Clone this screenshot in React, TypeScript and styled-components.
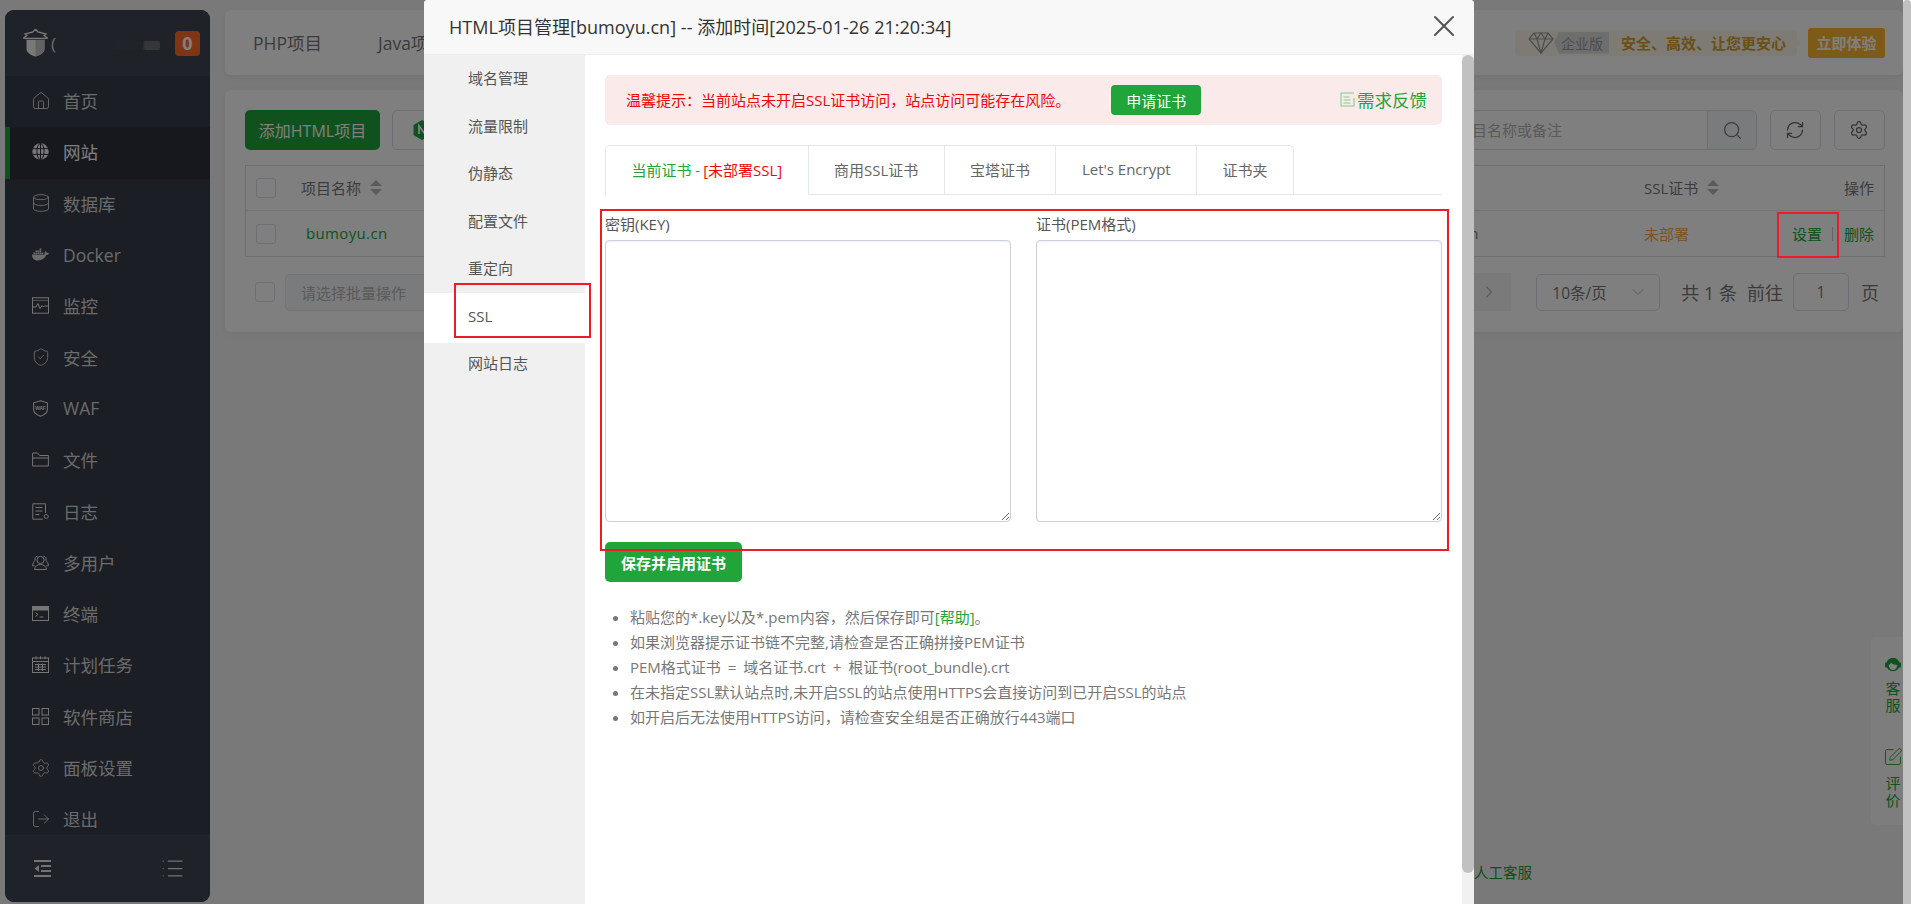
import React from "react";
import styled, { createGlobalStyle } from "styled-components";
import { Home, Database, ShieldCheck, Settings, LogOut, List, Search, RefreshCw, ChevronRight, ChevronDown, X, SquarePen } from "lucide-react";
import { FaDocker } from "react-icons/fa";

const FONT = `"Open Sans", "Noto Sans CJK SC", sans-serif`;
const GREEN = "#20a53a";

const Global = createGlobalStyle`
  html, body { margin: 0; padding: 0; width: 1911px; height: 904px; overflow: hidden; background: #f2f2f2; }
  body { font-family: ${FONT}; }
  * { box-sizing: border-box; }
`;

const Root = styled.div`display:flex;width:1911px;height:904px;`;
const Viewport = styled.div`position:relative;width:1903px;height:904px;overflow:hidden;background:#f2f2f2;`;
const PageThumb = styled.div`width:8px;height:904px;background:#c1c1c1;border-radius:4px 4px 0 0;`;
const Shell = styled.div`display:flex;height:904px;`;

const Sidebar = styled.aside`
  width:205px;margin:10px 0 2px 5px;background:#363c48;border-radius:9px;overflow:hidden;
  display:flex;flex-direction:column;flex:none;
`;
const Brand = styled.div`
  height:66px;flex:none;background:#3e4450;display:flex;align-items:center;padding:0 10px 0 18px;
`;
const BrandMark = styled.span`font-size:17px;color:#d8d8d8;margin-left:3px;width:14px;overflow:hidden;`;
const Smudge = styled.span`
  width:46px;height:9px;margin:5px 0 0 49px;border-radius:2px;
  background:linear-gradient(90deg,#404650 0%,#404650 62%,#6a6c72 68%,#6a6c72 100%);filter:blur(.6px);
`;
const Badge = styled.span`
  margin-left:auto;width:25px;height:25px;border-radius:4px;background:#ff6a28;color:#fff;
  font-size:18px;font-weight:700;display:flex;align-items:center;justify-content:center;
`;
const Nav = styled.nav`flex:1;min-height:0;overflow:hidden;`;
const NavItem = styled.div<{ $active?: boolean }>`
  height:51.3px;display:flex;align-items:center;gap:14px;padding-left:${p => (p.$active ? 22 : 27)}px;padding-bottom:2px;
  font-size:17.5px;color:${p => (p.$active ? "#fff" : "#d6d6d6")};
  background:${p => (p.$active ? "#2c303a" : "transparent")};
  border-left:${p => (p.$active ? `5px solid ${GREEN}` : "0")};
  & > svg{width:17px;height:17px;flex:none;}
`;
const NavGlyph = styled.span`
  display:flex;width:17px;height:17px;align-items:center;justify-content:center;flex:none;
  svg{width:20px;height:20px;flex:none;}
`;
const SideFoot = styled.div`
  height:67px;flex:none;background:#3e4450;border-top:1px solid #454b57;display:flex;align-items:center;
  justify-content:space-between;padding:0 25px 2px 29px;color:#e6e6e6;
`;

const Main = styled.main`flex:1;min-width:0;padding:10px 0 0 15px;display:flex;flex-direction:column;gap:15px;`;
const Card = styled.section`background:#fff;border-radius:6px;box-shadow:0 2px 6px rgba(0,0,0,.05);`;
const TopBar = styled(Card)`height:65px;display:flex;align-items:center;padding:0 18px 0 28px;gap:56px;`;
const TopTab = styled.span`font-size:17.5px;color:#777;`;
const Promo = styled.div`margin-left:auto;display:flex;align-items:center;`;
const PromoPill = styled.div`
  position:relative;height:26px;width:282px;background:#fcf7ea;border-radius:4px;display:flex;align-items:center;padding-left:13px;
  &::after{content:"";position:absolute;right:-4px;top:8px;border-left:5px solid #fcf7ea;border-top:5px solid transparent;border-bottom:5px solid transparent;}
`;
const EditionTag = styled.span`
  height:22px;width:55px;background:#dcdcdc;color:#9a9a9a;font-size:14px;display:flex;align-items:center;justify-content:flex-end;padding-right:6px;
  clip-path:polygon(0 50%,5px 0,100% 0,100% 100%,5px 100%);
`;
const PromoText = styled.span`font-size:15px;font-weight:700;color:#d49e2c;margin-left:12px;white-space:nowrap;`;
const TrialButton = styled.span`
  margin-left:11px;width:77px;height:30px;border-radius:3px;background:#fab52f;color:#fff;font-size:15px;font-weight:700;
  display:flex;align-items:center;justify-content:center;
`;

const ListCard = styled(Card)`padding:20px 18px 21px 20px;`;
const Toolbar = styled.div`height:40px;display:flex;align-items:center;`;
const PrimaryButton = styled.span`
  width:135px;height:40px;border-radius:5px;background:${GREEN};color:#fff;font-size:16px;
  display:flex;align-items:center;justify-content:center;
`;
const OutlineButton = styled.span`
  margin-left:12px;width:120px;height:40px;border-radius:5px;border:1px solid #dcdfe6;padding-left:20px;display:flex;align-items:center;
`;
const SearchGroup = styled.div`margin-left:auto;display:flex;height:40px;`;
const SearchInput = styled.div`
  width:312px;border:1px solid #dcdfe6;border-right:0;border-radius:5px 0 0 5px;padding:0 0 2px 16px;font-size:15px;color:#b4b4b4;display:flex;align-items:center;
`;
const SearchButton = styled.div`
  width:50px;border:1px solid #dcdfe6;border-radius:0 5px 5px 0;background:#f5f7fa;color:#777;display:flex;align-items:center;justify-content:center;
`;
const IconButton = styled.div`
  margin-left:12.5px;width:51.5px;height:40px;border:1px solid #dcdfe6;border-radius:5px;color:#666;display:flex;align-items:center;justify-content:center;
`;

const Table = styled.div`margin-top:15px;border:1px solid #dddfe2;height:92px;`;
const TableRow = styled.div<{ $head?: boolean }>`
  display:grid;grid-template-columns:55px 1099px 244px 133px 1fr;align-items:center;height:${p => (p.$head ? 45 : 46)}px;
  ${p => (p.$head ? "border-bottom:1px solid #e6e8eb;color:#777;" : "")}
  font-size:15px;
`;
const Check = styled.span`
  display:block;width:20px;height:20px;border:1px solid #dcdfe6;border-radius:3px;background:#fff;margin-left:10px;flex:none;
`;
const HeadCell = styled.div`display:flex;align-items:center;gap:9px;white-space:nowrap;margin-top:-1px;`;
const SiteName = styled.span`margin:-2px 0 0 5px;color:${GREEN};letter-spacing:.35px;`;
const HiddenNote = styled.span`margin-top:-2px;color:#777;`;
const Unset = styled.span`margin-top:-2px;color:#f0a64a;`;
const Ops = styled.div`display:flex;justify-content:flex-end;align-items:center;padding-right:10px;color:#777;margin-top:-1px;`;
const OpLink = styled.span`color:${GREEN};margin-top:-1px;`;
const OpSep = styled.span`width:1px;height:14px;background:#c8c8c8;margin:0 11px 0 10px;`;

const Pager = styled.div`margin-top:16px;height:38px;display:flex;align-items:center;`;
const BatchSelect = styled.div`
  width:300px;height:37px;border:1px solid #e4e7ed;border-radius:5px;background:#f5f7fa;color:#b4b4b4;font-size:15px;
  display:flex;align-items:center;padding-left:15px;margin-left:10px;
`;
const PagerRight = styled.div`margin-left:auto;display:flex;align-items:center;height:38px;font-size:18px;color:#777;`;
const NextBtn = styled.div`
  width:50px;height:38px;background:#f4f4f5;color:#b8b8b8;display:flex;align-items:center;justify-content:center;padding-left:6px;
`;
const SizeSelect = styled.div`
  margin-left:25px;width:124px;height:37px;border:1px solid #dcdfe6;border-radius:5px;font-size:15.5px;display:flex;align-items:center;justify-content:space-between;padding:0 11px 0 15px;
  svg{color:#bbb;}
`;
const TotalText = styled.span`margin-left:21px;white-space:pre;`;
const GotoText = styled.span`margin-left:10px;`;
const PageInput = styled.div`
  margin-left:10px;width:56px;height:38px;border:1px solid #dcdfe6;border-radius:5px;font-size:15.5px;display:flex;align-items:center;justify-content:center;
`;
const UnitText = styled.span`margin-left:12px;margin-right:6px;`;

const FloatPanel = styled.div`
  position:absolute;right:0;top:637px;width:32px;height:188px;background:#fbfbfb;border-radius:5px 0 0 5px;
  display:flex;flex-direction:column;align-items:center;padding:20px 0 0 12px;color:${GREEN};font-size:15px;line-height:16.5px;
`;
const FloatLabel = styled.span<{ $mb?: number }>`
  display:block;width:15px;margin:8px 0 ${p => p.$mb ?? 0}px;text-align:center;
`;
const PenGlyph = styled(SquarePen)`margin:0 -2px;`;
const ServiceLink = styled.span`
  position:absolute;right:371px;top:862px;font-size:14.5px;line-height:22px;color:#1f9c35;white-space:nowrap;
`;

const Mask = styled.div`position:absolute;inset:0;background:rgba(0,0,0,.5);z-index:10;`;

const Modal = styled.div`
  position:absolute;left:424px;top:0;width:1050px;height:904px;background:#fff;border-radius:4px 4px 0 0;z-index:11;
  display:flex;flex-direction:column;overflow:hidden;
`;
const ModalHead = styled.header`
  height:55px;flex:none;background:#f8f8f8;border-bottom:1px solid #eee;display:flex;align-items:center;justify-content:space-between;
  padding:0 12px 2px 25px;font-size:18px;letter-spacing:.03px;color:#333;white-space:nowrap;
  svg{color:#555;}
`;
const ModalBody = styled.div`flex:1;min-height:0;display:flex;`;
const SideMenu = styled.div`width:161px;flex:none;background:#f0f0f0;`;
const MenuItem = styled.div<{ $active?: boolean }>`
  height:${p => (p.$active ? 50 : 47.5)}px;margin-bottom:${p => (p.$active ? -2.5 : 0)}px;
  ${p => (p.$active ? "background:#fff;" : "")}
  padding-left:44px;line-height:47.5px;font-size:15px;color:#555;
`;
const Content = styled.div`flex:1;min-width:0;padding:20px 20px 0;`;
const ModalScroll = styled.div`width:12px;flex:none;background:#f1f1f1;`;
const ModalThumb = styled.div`height:818px;background:#c1c1c1;border-radius:6px;`;

const Alert = styled.div`
  height:50px;border-radius:5px;background:#faeaea;padding:0 15px 0 21px;display:flex;align-items:center;font-size:15px;color:#ef0808;
`;
const AlertText = styled.span`margin-top:-2px;`;
const AlertButton = styled.span`
  margin-left:41px;width:90px;height:30px;border-radius:4px;background:${GREEN};color:#fff;font-size:15px;display:flex;align-items:center;justify-content:center;
`;
const Feedback = styled.span`margin:-2px 0 0 auto;display:flex;align-items:center;gap:2px;font-size:17.5px;color:${GREEN};`;

const Tabs = styled.div`margin-top:20px;height:50px;display:flex;border-bottom:1px solid #e4e7ed;`;
const TabBtn = styled.div<{ $active?: boolean }>`
  height:${p => (p.$active ? 50 : 49)}px;padding:0 25.4px 2px;display:flex;align-items:center;font-size:15px;color:#666;background:#fff;
  border:1px solid #e4e7ed;border-width:1px 1px 0 0;
  ${p => (p.$active ? "border-left-width:1px;border-radius:5px 0 0 0;" : "")}
  &:last-child{border-radius:0 5px 0 0;}
`;
const TabGreen = styled.span`color:${GREEN};`;
const TabRed = styled.span`color:#ef0808;margin-left:3px;`;

const CertGrid = styled.div`margin-top:21px;display:grid;grid-template-columns:406px 406px;column-gap:25px;`;
const FieldLabel = styled.label`display:block;height:24px;font-size:15px;line-height:17px;color:#555;`;
const CertArea = styled.textarea`
  display:block;width:406px;height:282px;border:1px solid #ccd0dc;border-radius:4px;background:#fff;resize:both;outline:none;
  box-shadow:inset 0 1px 2px rgba(0,0,0,.06);
`;
const SaveButton = styled.span`
  position:relative;z-index:2;margin-top:20px;width:137px;height:40px;border-radius:5px;background:${GREEN};color:#fff;font-size:15px;font-weight:600;
  display:flex;align-items:center;justify-content:center;
`;
const Notes = styled.ul`margin:23px 0 0;padding:0 0 0 25px;font-size:15px;line-height:25px;color:#777;word-spacing:3px;`;
const Note = styled.li`&::marker{color:#777;}`;
const HelpLink = styled.span`color:${GREEN};`;

const Annotation = styled.div`position:absolute;border:2px solid #ed1c24;z-index:12;pointer-events:none;`;
const SslMark = styled(Annotation)`left:454px;top:283px;width:137px;height:55px;`;
const FormMark = styled(Annotation)`left:600px;top:209px;width:849px;height:342px;z-index:11;`;
const ActionMark = styled(Annotation)`left:1777px;top:212px;width:62px;height:46px;`;

const GlobeIcon = () => (
  <svg viewBox="0 0 17 17"><circle cx="8.5" cy="8.5" r="8.2" fill="#f0f0f0" /><g stroke="#2c303a" strokeWidth="1" fill="none"><ellipse cx="8.5" cy="8.5" rx="3.6" ry="8" /><path d="M8.5 .5v16M.6 5.6h15.8M.6 11.4h15.8" /></g></svg>
);
const MonitorIcon = () => (
  <svg viewBox="0 0 17 17" fill="none" stroke="#e8e8e8" strokeWidth="1"><rect x=".5" y=".8" width="16" height="15.4" /><path d="M1 10h3l2-3.5 2 5 2-3 1.5 1.500 1-1h3.500" /><path d="M1 3.500h15" opacity=".6" /></svg>
);
const WafIcon = () => (
  <svg viewBox="0 0 17 18" fill="none" stroke="#e8e8e8" strokeWidth="1.100"><path d="M8.500 .8 15.800 3v7c0 3.500-3.400 5.800-7.300 7.200C4.600 15.800 1.200 13.500 1.200 10V3z" /><text x="8.500" y="10.500" textAnchor="middle" fontSize="5" fontWeight="700" fill="#e8e8e8" stroke="none" fontFamily="Liberation Sans, sans-serif">WAF</text></svg>
);
const LogIcon = () => (
  <svg viewBox="0 0 17 17" fill="none" stroke="#e8e8e8" strokeWidth="1"><path d="M13.500 10V.8H.8v15.400h10" /><path d="M3.500 4.500h7M3.500 8h7M3.500 11.500h4" /><circle cx="14.200" cy="13.500" r="2" /></svg>
);
const UsersIcon = () => (
  <svg viewBox="0 0 17 17" fill="none" stroke="#e8e8e8" strokeWidth="1"><circle cx="8.500" cy="6" r="3.600" /><path d="M2.500 15.500c.4-3 2.800-5 6-5s5.600 2 6 5z" /><path d="M5.500 2.400C3.200 2.300 2.300 4.500 3.200 6.400 1.600 7.500.6 9.600.6 11.800h2M11.500 2.400c2.300-.1 3.200 2.100 2.300 4 1.600 1.100 2.600 3.200 2.600 5.400h-2" /></svg>
);
const TerminalIcon = () => (
  <svg viewBox="0 0 17 15" fill="none" stroke="#e8e8e8" strokeWidth="1"><rect x=".5" y=".5" width="16" height="14" /><rect x=".5" y=".5" width="16" height="3.500" fill="#e8e8e8" /><path d="M3.500 6.500 6 8.500l-2.500 2M7.500 11h4" /></svg>
);
const CalendarIcon = () => (
  <svg viewBox="0 0 17 17" fill="none" stroke="#e8e8e8" strokeWidth="1"><rect x=".5" y="2" width="16" height="14.500" /><path d="M4 .3v3M8.500 .3v3M13 .3v3M.5 5.500h16M3 8.500h11M3 11h11M3 13.500h11M6.500 7.500v7.500M10.500 7.500v7.500" /></svg>
);
const GridIcon = () => (
  <svg viewBox="0 0 17 17" fill="none" stroke="#e8e8e8" strokeWidth="1"><rect x=".5" y=".5" width="6.500" height="6.500" /><rect x="10" y=".5" width="6.500" height="6.500" /><rect x=".5" y="10" width="6.500" height="6.500" /><rect x="10" y="10" width="6.500" height="6.500" /></svg>
);
const FolderIcon = () => (
  <svg viewBox="0 0 17 15" fill="none" stroke="#e8e8e8" strokeWidth="1"><path d="M.6 14V1h5l2 2.500h8.800V14z" /><path d="M.6 6h15.800" /></svg>
);
const IndentIcon = () => (
  <svg width="18" height="17" viewBox="0 0 18 17" fill="#e6e6e6"><rect y="0" width="17" height="2" /><rect x="7" y="5" width="10" height="2" /><rect x="7" y="10" width="10" height="2" /><rect y="15" width="17" height="2" /><path d="M5 5v7L.5 8.500z" /></svg>
);
const LogoIcon = () => (
  <svg width="25" height="28" viewBox="0 0 25 28"><path d="M12.500 0 15 3l8 2-2 1.500L24.500 9l-3 .5H3.500L.5 9 4 6.500 2 5l8-2z" fill="none" stroke="#f5f5f5" strokeWidth="1.300" /><path d="M3.500 11h18v9c0 3.500-4 6-9 7.500-5-1.500-9-4-9-7.500z" fill="#f2f2f2" /><path d="M12.500 11h9v9c0 3.500-4 6-9 7.500z" fill="#c4c4c4" /></svg>
);
const NginxIcon = () => (
  <svg width="18" height="20" viewBox="0 0 18 20"><path d="M9 0 17.500 5v10L9 20 .5 15V5z" fill={GREEN} /><path d="M6 14V6l6 8V6" fill="none" stroke="#fff" strokeWidth="1.800" /></svg>
);
const SortIcon = () => (
  <svg width="12" height="15" viewBox="0 0 12 15" fill="#b4b4b4"><path d="M6 0 12 6H0zM0 9h12l-6 6z" /></svg>
);
const GemIcon = () => (
  <svg width="26" height="22" viewBox="0 0 26 22" fill="none" stroke="#999" strokeWidth="1.200"><path d="M6 1h14l5 6-12 14L1 7z" /><path d="M1 7h24M9 7l4 14 4-14M6 1l3 6 4-6 4 6 3-6" /></svg>
);
const AgentIcon = () => (
  <svg width="16" height="15" viewBox="0 0 16 15" fill="none"><circle cx="8" cy="7.500" r="6.800" fill={GREEN} /><path d="M3.600 8c.4 3 2.200 5 4.400 5s4-2 4.400-5c-2.400 0-5-.6-6.400-2.200C5.600 7 4.600 7.800 3.600 8z" fill="#fff" /><rect y="5.500" width="2.400" height="5" rx="1" fill={GREEN} /><rect x="13.600" y="5.500" width="2.400" height="5" rx="1" fill={GREEN} /></svg>
);
const FeedbackIcon = () => (
  <svg width="15" height="15" viewBox="0 0 15 15" fill="none" stroke="#7fd08e" strokeWidth="1.100"><path d="M14 1H1v13h13V6" /><path d="M3.500 5h6M3.500 8h7M3.500 11h7" /></svg>
);

const navItems: { label: string; icon: React.ReactNode; active?: boolean }[] = [
  { label: "首页", icon: <NavGlyph><Home strokeWidth={1.1} /></NavGlyph> },
  { label: "网站", icon: <GlobeIcon />, active: true },
  { label: "数据库", icon: <NavGlyph><Database strokeWidth={1.1} /></NavGlyph> },
  { label: "Docker", icon: <FaDocker /> },
  { label: "监控", icon: <MonitorIcon /> },
  { label: "安全", icon: <NavGlyph><ShieldCheck strokeWidth={1.1} /></NavGlyph> },
  { label: "WAF", icon: <WafIcon /> },
  { label: "文件", icon: <FolderIcon /> },
  { label: "日志", icon: <LogIcon /> },
  { label: "多用户", icon: <UsersIcon /> },
  { label: "终端", icon: <TerminalIcon /> },
  { label: "计划任务", icon: <CalendarIcon /> },
  { label: "软件商店", icon: <GridIcon /> },
  { label: "面板设置", icon: <NavGlyph><Settings strokeWidth={1.1} /></NavGlyph> },
  { label: "退出", icon: <NavGlyph><LogOut strokeWidth={1.1} /></NavGlyph> },
];
const menuItems = ["域名管理", "流量限制", "伪静态", "配置文件", "重定向", "SSL", "网站日志"];
const notes: React.ReactNode[] = [
  <>粘贴您的*.key以及*.pem内容，然后保存即可<HelpLink>[帮助]</HelpLink>。</>,
  "如果浏览器提示证书链不完整,请检查是否正确拼接PEM证书",
  "PEM格式证书 = 域名证书.crt + 根证书(root_bundle).crt",
  "在未指定SSL默认站点时,未开启SSL的站点使用HTTPS会直接访问到已开启SSL的站点",
  "如开启后无法使用HTTPS访问，请检查安全组是否正确放行443端口",
];

export default function App() {
  return (
    <Root>
      <Global />
      <Viewport>
        <Shell>
          <Sidebar>
            <Brand>
              <LogoIcon />
              <BrandMark>(</BrandMark>
              <Smudge />
              <Badge>0</Badge>
            </Brand>
            <Nav>
              {navItems.map(n => (
                <NavItem key={n.label} $active={n.active}>{n.icon}{n.label}</NavItem>
              ))}
            </Nav>
            <SideFoot><IndentIcon /><List size={25} strokeWidth={1.2} /></SideFoot>
          </Sidebar>
          <Main>
            <TopBar>
              <TopTab>PHP项目</TopTab>
              <TopTab>Java项目</TopTab>
              <Promo>
                <PromoPill>
                  <GemIcon />
                  <EditionTag>企业版</EditionTag>
                  <PromoText>安全、高效、让您更安心</PromoText>
                </PromoPill>
                <TrialButton>立即体验</TrialButton>
              </Promo>
            </TopBar>
            <ListCard>
              <Toolbar>
                <PrimaryButton>添加HTML项目</PrimaryButton>
                <OutlineButton><NginxIcon /></OutlineButton>
                <SearchGroup>
                  <SearchInput>请输入项目名称或备注</SearchInput>
                  <SearchButton><Search size={21} strokeWidth={1.4} /></SearchButton>
                </SearchGroup>
                <IconButton><RefreshCw size={20} strokeWidth={1.5} /></IconButton>
                <IconButton><Settings size={20} strokeWidth={1.5} /></IconButton>
              </Toolbar>
              <Table>
                <TableRow $head>
                  <Check />
                  <HeadCell>项目名称<SortIcon /></HeadCell>
                  <span />
                  <HeadCell>SSL证书<SortIcon /></HeadCell>
                  <Ops>操作</Ops>
                </TableRow>
                <TableRow>
                  <Check />
                  <SiteName>bumoyu.cn</SiteName>
                  <HiddenNote>bumoyu.cn</HiddenNote>
                  <Unset>未部署</Unset>
                  <Ops><OpLink>设置</OpLink><OpSep /><OpLink>删除</OpLink></Ops>
                </TableRow>
              </Table>
              <Pager>
                <Check />
                <BatchSelect>请选择批量操作</BatchSelect>
                <PagerRight>
                  <NextBtn><ChevronRight size={20} strokeWidth={1.3} /></NextBtn>
                  <SizeSelect>10条/页<ChevronDown size={20} strokeWidth={1.2} /></SizeSelect>
                  <TotalText>共 1 条</TotalText>
                  <GotoText>前往</GotoText>
                  <PageInput>1</PageInput>
                  <UnitText>页</UnitText>
                </PagerRight>
              </Pager>
            </ListCard>
          </Main>
        </Shell>
        <ServiceLink>联系人工客服</ServiceLink>
        <FloatPanel>
          <AgentIcon />
          <FloatLabel $mb={34}>客服</FloatLabel>
          <PenGlyph size={20} strokeWidth={1.1} />
          <FloatLabel>评价</FloatLabel>
        </FloatPanel>
        <Mask />
        <Modal>
          <ModalHead>
            <span>HTML项目管理[bumoyu.cn] -- 添加时间[2025-01-26 21:20:34]</span>
            <X size={36} strokeWidth={1.3} />
          </ModalHead>
          <ModalBody>
            <SideMenu>
              {menuItems.map(m => (
                <MenuItem key={m} $active={m === "SSL"}>{m}</MenuItem>
              ))}
            </SideMenu>
            <Content>
              <Alert>
                <AlertText>温馨提示：当前站点未开启SSL证书访问，站点访问可能存在风险。</AlertText>
                <AlertButton>申请证书</AlertButton>
                <Feedback><FeedbackIcon />需求反馈</Feedback>
              </Alert>
              <Tabs>
                <TabBtn $active><TabGreen>当前证书 -</TabGreen><TabRed>[未部署SSL]</TabRed></TabBtn>
                <TabBtn>商用SSL证书</TabBtn>
                <TabBtn>宝塔证书</TabBtn>
                <TabBtn>Let's Encrypt</TabBtn>
                <TabBtn>证书夹</TabBtn>
              </Tabs>
              <CertGrid>
                <div><FieldLabel>密钥(KEY)</FieldLabel><CertArea /></div>
                <div><FieldLabel>证书(PEM格式)</FieldLabel><CertArea /></div>
              </CertGrid>
              <SaveButton>保存并启用证书</SaveButton>
              <Notes>
                {notes.map((n, i) => <Note key={i}>{n}</Note>)}
              </Notes>
            </Content>
            <ModalScroll><ModalThumb /></ModalScroll>
          </ModalBody>
        </Modal>
        <SslMark />
        <FormMark />
        <ActionMark />
      </Viewport>
      <PageThumb />
    </Root>
  );
}
